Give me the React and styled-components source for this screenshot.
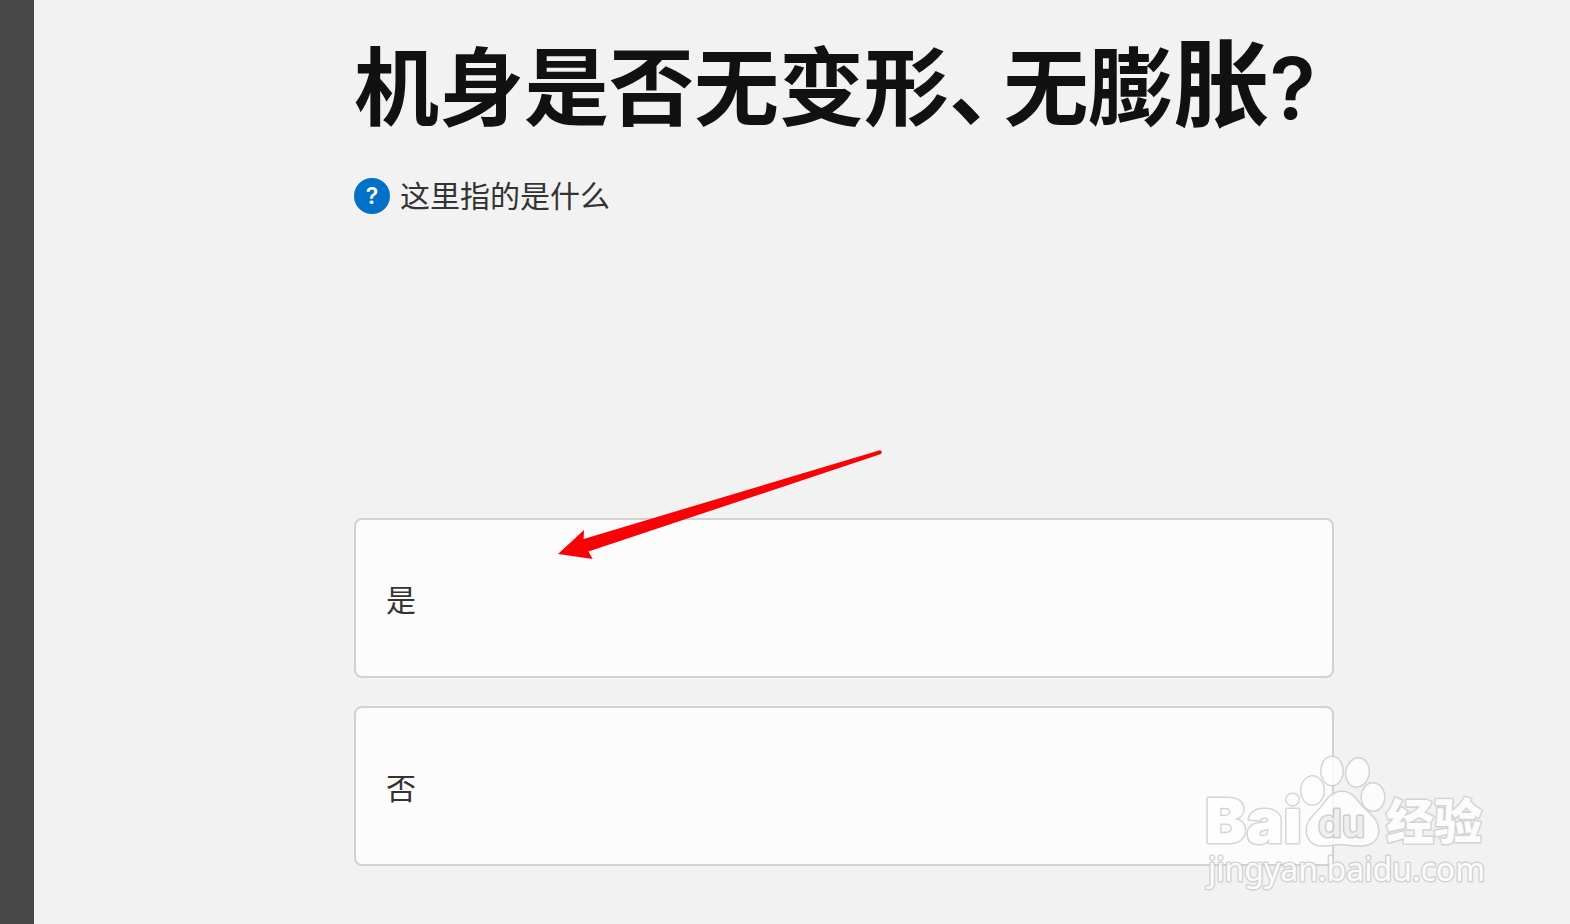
import React, { useState } from 'react'
import styled, { createGlobalStyle } from 'styled-components'

const options = [
  { id: 'yes', label: '是' },
  { id: 'no', label: '否' },
]

const Arrow = () => (
  <Pointer viewBox="0 0 324 110" aria-hidden="true">
    <path
      d="M0 104 L26 80 L25.600 89 L321 .4 Q324 0 323.700 2.800 L323 4 L30.400 101.500 L34.700 109 Z"
      fill="#fb0007"
    />
  </Pointer>
)

const Watermark = () => (
  <Mark viewBox="0 0 290 140" role="img" aria-label="Baidu 经验">
    <g
      opacity="0.8"
      fill="#fff"
      stroke="#ccc"
      strokeWidth="3"
      strokeLinejoin="round"
      paintOrder="stroke"
    >
      <ellipse cx="108.500" cy="36.500" rx="11" ry="14" />
      <ellipse cx="128" cy="17" rx="10.500" ry="14" />
      <ellipse cx="153.500" cy="18.500" rx="11" ry="14" transform="rotate(10 153.500 18.500)" />
      <ellipse cx="169" cy="43" rx="11" ry="13.500" />
      <path d="M138 38 C148 38 152 46 158 53 C165 60 174 65 174 77 C174 85 168 90 160 91 C150 92 146 90 138 90 C128 90 124 92 115 91 C107 90 103 83 103 76 C103 66 111 61 117 54 C123 46 128 38 138 38 Z" />
      <Bai x="1" y="89">Bai</Bai>
      <Du x="114" y="83">du</Du>
      <Hanzi x="182" y="85">经验</Hanzi>
      <Domain x="4" y="127">jingyan.baidu.com</Domain>
    </g>
  </Mark>
)

const App = () => {
  const [answer, setAnswer] = useState(null)

  return (
    <Page>
      <GlobalStyle />
      <Backdrop />
      <Panel>
        <Title>
          机身是否无变形<Comma>、</Comma>无膨<Large>胀</Large>
          <Question>?</Question>
        </Title>
        <Help type="button">
          <HelpIcon>?</HelpIcon>
          这里指的是什么
        </Help>
        <Options>
          {options.map(option => (
            <Option
              key={option.id}
              type="button"
              aria-pressed={answer === option.id}
              onClick={() => setAnswer(option.id)}
            >
              {option.label}
            </Option>
          ))}
          <Arrow />
        </Options>
        <Watermark />
      </Panel>
    </Page>
  )
}

export default App

const GlobalStyle = createGlobalStyle`
  * {
    box-sizing: border-box;
  }

  body {
    margin: 0;
    background-color: #f2f2f2;
    font-family: 'Noto Sans CJK SC', sans-serif;
  }
`

const Page = styled.div`
  display: flex;
  min-height: 100vh;
`

const Backdrop = styled.div`
  flex: 0 0 34px;
  background-color: #484848;
`

const Panel = styled.main`
  position: relative;
  flex: 1;
  display: flex;
  flex-direction: column;
  align-items: flex-start;
  padding: 22px 236px 56px 320px;
`

const Title = styled.h1`
  margin: 0;
  color: #111;
  font-size: 85px;
  font-weight: 700;
  line-height: 120px;
  white-space: nowrap;
`

const Comma = styled.span`
  padding-right: 12px;
  font-feature-settings: 'halt';
`

const Large = styled.span`
  font-size: 96px;
  line-height: 0;
`

const Question = styled.span`
  font-family: Inter, sans-serif;
  font-weight: 600;
  line-height: 0;
`

const Help = styled.button`
  display: flex;
  gap: 10px;
  margin-top: 36px;
  padding: 0;
  border: none;
  background: none;
  color: #333;
  font-family: inherit;
  font-size: 30px;
  line-height: 32px;
  cursor: pointer;
`

const HelpIcon = styled.span`
  display: flex;
  align-items: center;
  justify-content: center;
  width: 36px;
  height: 36px;
  border-radius: 50%;
  background-color: #0070c9;
  color: #fff;
  font-family: Inter, sans-serif;
  font-size: 23px;
  font-weight: 600;
`

const Options = styled.div`
  position: relative;
  display: flex;
  flex-direction: column;
  gap: 28px;
  align-self: stretch;
  margin-top: 304px;
`

const Option = styled.button`
  height: 160px;
  padding: 0 30px;
  border: 2px solid #d2d2d2;
  border-radius: 8px;
  background-color: #fcfcfc;
  color: #333;
  font-family: inherit;
  font-size: 30px;
  text-align: left;
  cursor: pointer;
`

const Pointer = styled.svg`
  position: absolute;
  top: -68px;
  left: 204px;
  width: 324px;
  height: 110px;
  pointer-events: none;
`

const Mark = styled.svg`
  position: absolute;
  right: 76px;
  bottom: 30px;
  width: 290px;
  height: 140px;
  pointer-events: none;
`

const Bai = styled.text`
  font-family: Inter, sans-serif;
  font-size: 62px;
  font-weight: 900;
`

const Du = styled.text`
  fill: #eee;
  stroke: #c4c4c4;
  font-family: Inter, sans-serif;
  font-size: 38px;
  font-weight: 600;
`

const Hanzi = styled.text`
  font-family: 'Noto Sans CJK SC', sans-serif;
  font-size: 48px;
  font-weight: 900;
`

const Domain = styled.text`
  font-family: 'Noto Sans', sans-serif;
  font-size: 32px;
`
